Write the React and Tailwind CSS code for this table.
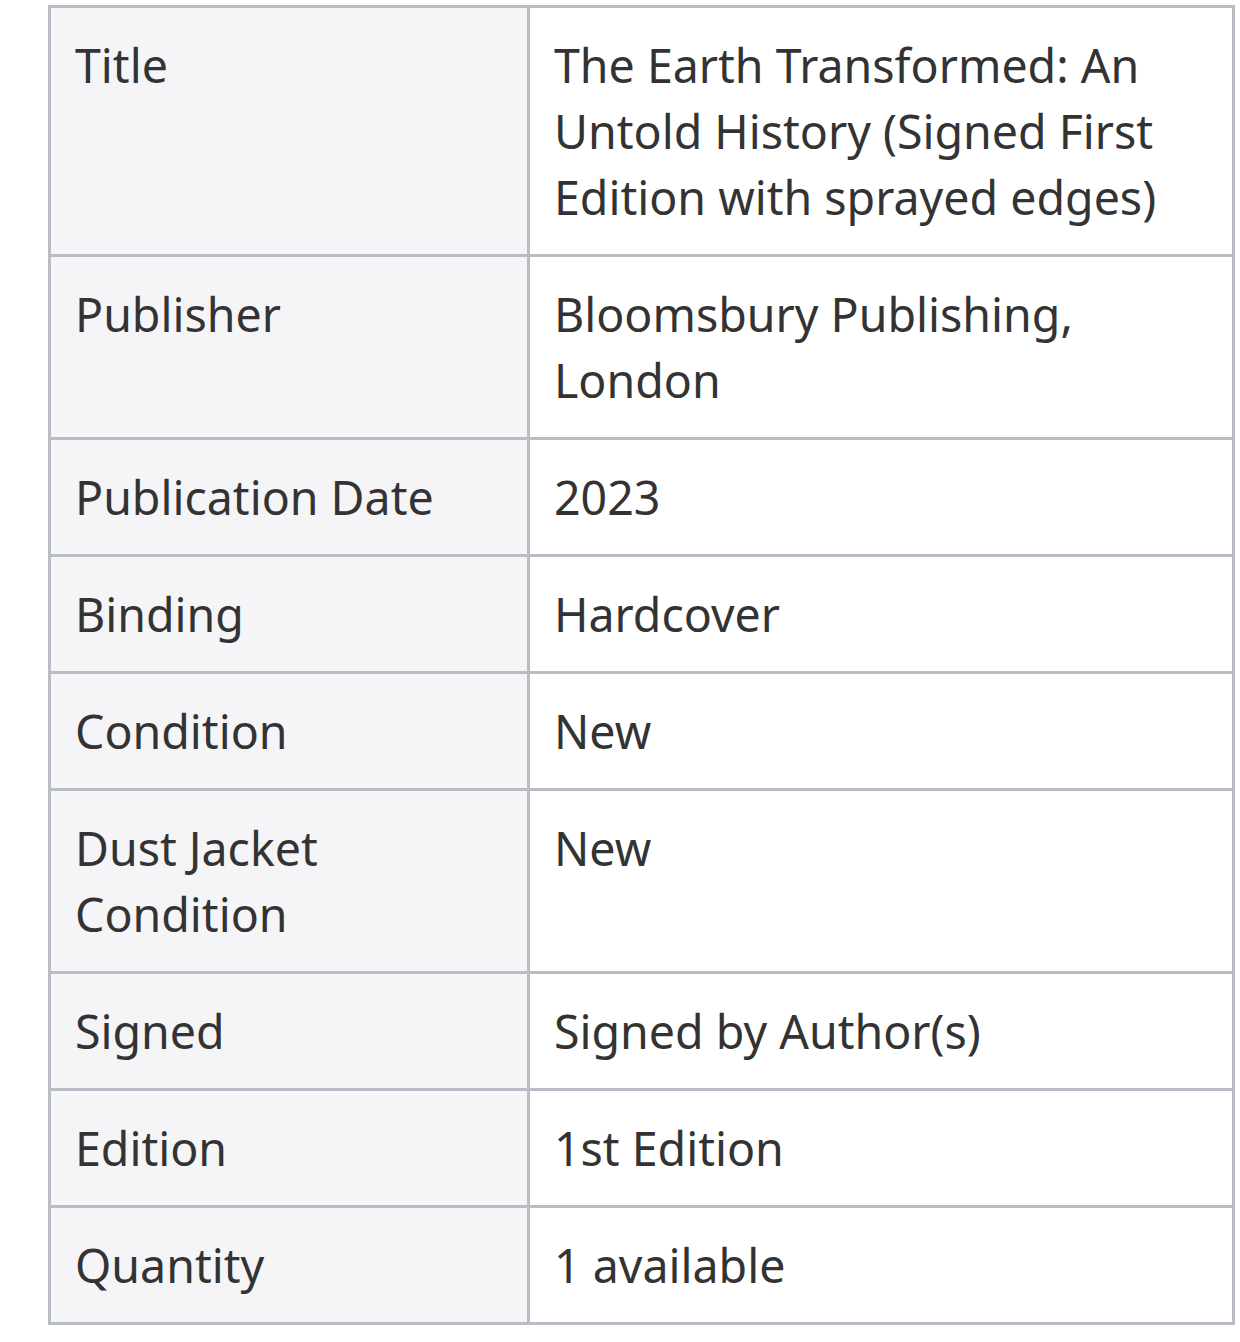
import React from "react";

const rows = [
  ["Title", "The Earth Transformed: An Untold History (Signed First Edition with sprayed edges)"],
  ["Publisher", "Bloomsbury Publishing, London"],
  ["Publication Date", "2023"],
  ["Binding", "Hardcover"],
  ["Condition", "New"],
  ["Dust Jacket Condition", "New"],
  ["Signed", "Signed by Author(s)"],
  ["Edition", "1st Edition"],
  ["Quantity", "1 available"],
];

export default function App() {
  return (
    <div className="bg-white min-h-screen pl-[48px] pt-[5px] font-['Noto_Sans',sans-serif] text-[#333333]">
      <table className="w-[1187px] border-collapse border-[3px] border-[#b8bdc5] text-[46.5px] leading-[66px]">
        <tbody>
          {rows.map(([label, value]) => (
            <tr key={label}>
              <th className="w-[479px] border-[3px] border-[#b8bdc5] bg-[#f5f5f7] px-[24px] py-[24px] text-left align-top font-normal">
                {label}
              </th>
              <td className="border-[3px] border-[#b8bdc5] bg-white px-[24px] py-[24px] align-top">
                {value}
              </td>
            </tr>
          ))}
        </tbody>
      </table>
    </div>
  );
}
